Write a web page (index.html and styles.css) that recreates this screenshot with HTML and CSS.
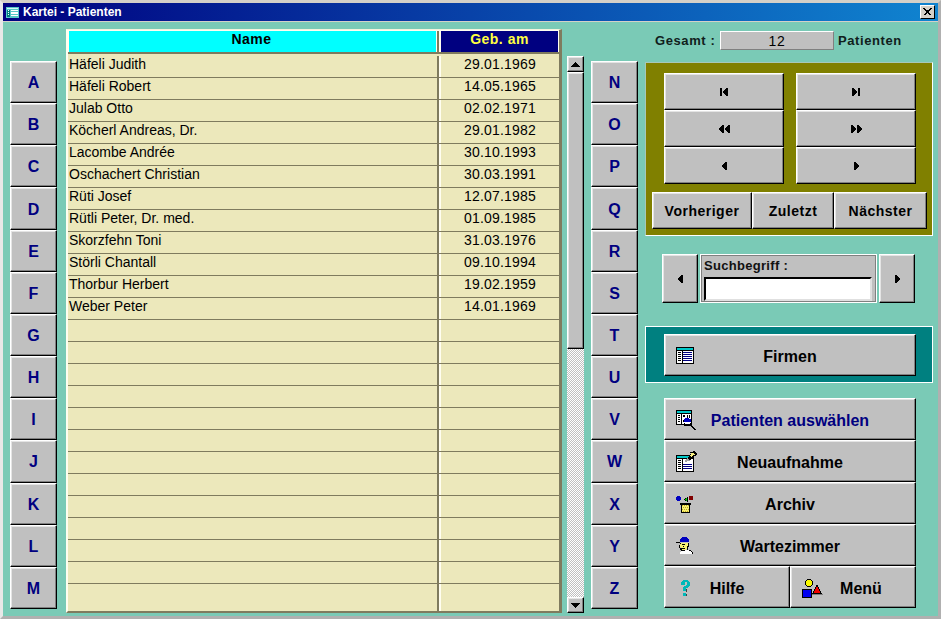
FILE: index.html
```html
<!DOCTYPE html>
<html lang="de">
<head>
    <meta charset="UTF-8">
    <title>Kartei - Patienten</title>
    <link rel="stylesheet" href="styles.css">
</head>
<body>
    <div class="window">
        <div class="titlebar">
            <svg class="title-icon" width="13" height="11" viewBox="0 0 13 11" shape-rendering="crispEdges">
                <rect width="13" height="11" fill="#58c8c8"/>
                <rect x="1" y="1" width="11" height="1" fill="#d8f8f8"/>
                <rect x="1" y="3" width="3" height="7" fill="#008080"/>
                <rect x="2" y="3" width="1" height="1" fill="#fff"/>
                <rect x="2" y="5" width="1" height="1" fill="#fff"/>
                <rect x="2" y="7" width="1" height="1" fill="#fff"/>
                <rect x="5" y="3" width="7" height="1" fill="#fff"/>
                <rect x="5" y="5" width="7" height="2" fill="#fff"/>
                <rect x="5" y="8" width="7" height="1" fill="#fff"/>
            </svg>
            <span class="title-text">Kartei - Patienten</span>
            <div class="close-btn">
                <svg width="9" height="8" viewBox="0 0 9 8" shape-rendering="crispEdges">
                    <path d="M0 0h2v1h1v1h3v-1h1v-1h2v1h-1v1h-1v1h-1v2h1v1h1v1h-2v-1h-1v-1h-1v1h-1v1h-2v-1h1v-1h1v-2h-1v-1h-1z" fill="#000"/>
                </svg>
            </div>
        </div>

        <div class="client">
            <div class="letters">
                <div class="btn letter">A</div>
                <div class="btn letter">B</div>
                <div class="btn letter">C</div>
                <div class="btn letter">D</div>
                <div class="btn letter">E</div>
                <div class="btn letter">F</div>
                <div class="btn letter">G</div>
                <div class="btn letter">H</div>
                <div class="btn letter">I</div>
                <div class="btn letter">J</div>
                <div class="btn letter">K</div>
                <div class="btn letter">L</div>
                <div class="btn letter">M</div>
            </div>

            <div class="list">
                <div class="list-head">
                    <div class="head-name">Name</div>
                    <div class="head-date">Geb. am</div>
                </div>
                <div class="row"><div class="name">Häfeli Judith</div><div class="date">29.01.1969</div></div>
                <div class="row"><div class="name">Häfeli Robert</div><div class="date">14.05.1965</div></div>
                <div class="row"><div class="name">Julab Otto</div><div class="date">02.02.1971</div></div>
                <div class="row"><div class="name">Köcherl Andreas, Dr.</div><div class="date">29.01.1982</div></div>
                <div class="row"><div class="name">Lacombe Andrée</div><div class="date">30.10.1993</div></div>
                <div class="row"><div class="name">Oschachert Christian</div><div class="date">30.03.1991</div></div>
                <div class="row"><div class="name">Rüti Josef</div><div class="date">12.07.1985</div></div>
                <div class="row"><div class="name">Rütli Peter, Dr. med.</div><div class="date">01.09.1985</div></div>
                <div class="row"><div class="name">Skorzfehn Toni</div><div class="date">31.03.1976</div></div>
                <div class="row"><div class="name">Störli Chantall</div><div class="date">09.10.1994</div></div>
                <div class="row"><div class="name">Thorbur Herbert</div><div class="date">19.02.1959</div></div>
                <div class="row"><div class="name">Weber Peter</div><div class="date">14.01.1969</div></div>
                <div class="row"><div class="name"></div><div class="date"></div></div>
                <div class="row"><div class="name"></div><div class="date"></div></div>
                <div class="row"><div class="name"></div><div class="date"></div></div>
                <div class="row"><div class="name"></div><div class="date"></div></div>
                <div class="row"><div class="name"></div><div class="date"></div></div>
                <div class="row"><div class="name"></div><div class="date"></div></div>
                <div class="row"><div class="name"></div><div class="date"></div></div>
                <div class="row"><div class="name"></div><div class="date"></div></div>
                <div class="row"><div class="name"></div><div class="date"></div></div>
                <div class="row"><div class="name"></div><div class="date"></div></div>
                <div class="row"><div class="name"></div><div class="date"></div></div>
                <div class="row"><div class="name"></div><div class="date"></div></div>
                <div class="row row-last"><div class="name"></div><div class="date"></div></div>
            </div>

            <div class="scrollbar">
                <div class="btn scroll-btn">
                    <svg width="9" height="5" viewBox="0 0 9 5" shape-rendering="crispEdges"><path d="M4 0h1v1h1v1h1v1h1v1h1v1h-9v-1h1v-1h1v-1h1v-1h1z"/></svg>
                </div>
                <div class="btn scroll-thumb"></div>
                <div class="scroll-track"></div>
                <div class="btn scroll-btn">
                    <svg width="9" height="5" viewBox="0 0 9 5" shape-rendering="crispEdges"><path d="M0 0h9v1h-1v1h-1v1h-1v1h-1v1h-1v-1h-1v-1h-1v-1h-1z"/></svg>
                </div>
            </div>

            <div class="letters letters-right">
                <div class="btn letter">N</div>
                <div class="btn letter">O</div>
                <div class="btn letter">P</div>
                <div class="btn letter">Q</div>
                <div class="btn letter">R</div>
                <div class="btn letter">S</div>
                <div class="btn letter">T</div>
                <div class="btn letter">U</div>
                <div class="btn letter">V</div>
                <div class="btn letter">W</div>
                <div class="btn letter">X</div>
                <div class="btn letter">Y</div>
                <div class="btn letter">Z</div>
            </div>

            <div class="side">
                <div class="total">
                    <span class="total-label">Gesamt :</span>
                    <div class="total-value">12</div>
                    <span class="total-unit">Patienten</span>
                </div>

                <div class="nav-panel">
                    <div class="nav-grid">
                        <div class="btn nav-btn">
                            <svg width="8" height="8" viewBox="0 0 8 8" shape-rendering="crispEdges"><path d="M0 0h2v8h-2zM6 0h2v8h-2v-1h-1v-1h-1v-1h-1v-2h1v-1h1v-1h1z"/></svg>
                        </div>
                        <div class="btn nav-btn">
                            <svg width="8" height="8" viewBox="0 0 8 8" shape-rendering="crispEdges"><path d="M6 0h2v8h-2zM0 0h2v1h1v1h1v1h1v2h-1v1h-1v1h-1v1h-2z"/></svg>
                        </div>
                        <div class="btn nav-btn">
                            <svg width="11" height="8" viewBox="0 0 11 8" shape-rendering="crispEdges"><path d="M3 0h2v8h-2v-1h-1v-1h-1v-1h-1v-2h1v-1h1v-1h1zM9 0h2v8h-2v-1h-1v-1h-1v-1h-1v-2h1v-1h1v-1h1z"/></svg>
                        </div>
                        <div class="btn nav-btn">
                            <svg width="11" height="8" viewBox="0 0 11 8" shape-rendering="crispEdges"><path d="M0 0h2v1h1v1h1v1h1v2h-1v1h-1v1h-1v1h-2zM6 0h2v1h1v1h1v1h1v2h-1v1h-1v1h-1v1h-2z"/></svg>
                        </div>
                        <div class="btn nav-btn">
                            <svg width="5" height="8" viewBox="0 0 5 8" shape-rendering="crispEdges"><path d="M3 0h2v8h-2v-1h-1v-1h-1v-1h-1v-2h1v-1h1v-1h1z"/></svg>
                        </div>
                        <div class="btn nav-btn">
                            <svg width="5" height="8" viewBox="0 0 5 8" shape-rendering="crispEdges"><path d="M0 0h2v1h1v1h1v1h1v2h-1v1h-1v1h-1v1h-2z"/></svg>
                        </div>
                    </div>
                    <div class="nav-text">
                        <div class="btn nav-label prev">Vorheriger</div>
                        <div class="btn nav-label last">Zuletzt</div>
                        <div class="btn nav-label next">Nächster</div>
                    </div>
                </div>

                <div class="search">
                    <div class="btn search-btn">
                        <svg width="5" height="8" viewBox="0 0 5 8" shape-rendering="crispEdges"><path d="M3 0h2v8h-2v-1h-1v-1h-1v-1h-1v-2h1v-1h1v-1h1z"/></svg>
                    </div>
                    <div class="search-box">
                        <span class="search-label">Suchbegriff :</span>
                        <input class="search-input" type="text">
                    </div>
                    <div class="btn search-btn">
                        <svg width="5" height="8" viewBox="0 0 5 8" shape-rendering="crispEdges"><path d="M0 0h2v1h1v1h1v1h1v2h-1v1h-1v1h-1v1h-2z"/></svg>
                    </div>
                </div>

                <div class="firm-panel">
                    <div class="btn action firm-btn">
                        <svg class="action-icon" width="18" height="17" viewBox="0 0 18 17" shape-rendering="crispEdges">
                            <rect width="18" height="17" fill="#000"/>
                            <rect x="1" y="1" width="16" height="2" fill="#00c8c8"/>
                            <rect x="1" y="4" width="16" height="12" fill="#fff"/>
                            <path d="M2 5h3v1h-3zM2 7h3v1h-3zM2 9h3v1h-3zM2 11h3v1h-3zM2 13h3v1h-3z" fill="#000"/>
                            <path d="M7 5h9v1h-9zM7 7h9v1h-9zM7 9h9v1h-9zM7 11h9v1h-9zM7 13h9v1h-9z" fill="#000080"/>
                            <rect x="6" y="4" width="1" height="12" fill="#000"/>
                        </svg>
                        <span class="action-text">Firmen</span>
                    </div>
                </div>

                <div class="actions">
                    <div class="btn action">
                        <svg class="action-icon" width="20" height="20" viewBox="0 0 20 20" shape-rendering="crispEdges">
                            <rect width="16" height="15" fill="#000"/>
                            <rect x="1" y="1" width="14" height="2" fill="#00c8c8"/>
                            <rect x="1" y="4" width="14" height="10" fill="#fff"/>
                            <path d="M2 5h2v1h-2zM2 7h2v1h-2zM2 9h2v1h-2zM2 11h2v1h-2zM5 4h1v10h-1zM7 5h2v2h-2zM11 5h1v3h-1zM13 5h1v3h-1z" fill="#000"/>
                            <path d="M8 9h1v-1h4v1h2v3h-7z" fill="#0000c0"/>
                            <path d="M7 10h1v3h1v1h5v-1h1v1h-1v1h-5v-1h-1zM8 15h6v1h-6z" fill="#000"/>
                            <path d="M9 13h5v1h-5z" fill="#fff"/>
                            <path d="M14 15h2v1h1v1h1v1h1v1h1v1h-2v-1h-1v-1h-1v-1h-1v-1h-1z" fill="#000"/>
                        </svg>
                        <span class="action-text selected">Patienten auswählen</span>
                    </div>
                    <div class="btn action">
                        <svg class="action-icon" width="21" height="21" viewBox="0 0 21 21" shape-rendering="crispEdges">
                            <rect y="4" width="18" height="17" fill="#000"/>
                            <rect x="1" y="5" width="16" height="2" fill="#00c8c8"/>
                            <rect x="1" y="8" width="16" height="12" fill="#fff"/>
                            <path d="M2 9h3v1h-3zM2 11h3v1h-3zM2 13h3v1h-3zM2 15h3v1h-3zM2 17h3v1h-3zM6 8h1v12h-1z" fill="#000"/>
                            <path d="M7 13h9v1h-9zM7 15h9v1h-9zM7 17h9v1h-9z" fill="#000080"/>
                            <path d="M14 1h3v-1h2v1h1v1h1v2h-1v1h-2v1h-1v1h-1v1h-1v1h-2v-1h-1v-2h1v-1h1v-2h1z" fill="#000"/>
                            <path d="M15 2h3v1h1v1h-2v1h-1v1h-1v-1h-1v-1h1z" fill="#f8f080"/>
                            <path d="M11 7h1v1h1v1h1v1h-3v1h-2v-2h1v-1h1z" fill="#a0a0a0"/>
                        </svg>
                        <span class="action-text">Neuaufnahme</span>
                    </div>
                    <div class="btn action">
                        <svg class="action-icon" width="18" height="18" viewBox="0 0 18 18" shape-rendering="crispEdges">
                            <path d="M1 1h3v1h1v3h-1v1h-3v-1h-1v-3h1z" fill="#0000c0"/>
                            <path d="M13 1h4v4h-4z" fill="#800000"/>
                            <path d="M11 2h1v5h-1v-1h-2v-1h-1v-1h1v-1h2z" fill="#000"/>
                            <path d="M10 3h1v3h-1v-1h-1v-1h1z" fill="#00c000"/>
                            <path d="M4 8h11v2h-1v8h-9v-8h-1z" fill="#000"/>
                            <path d="M6 10h7v7h-7z" fill="#f8f070"/>
                            <path d="M6 10h1v1h-1zM8 10h1v1h-1zM10 10h1v1h-1zM12 10h1v1h-1zM7 12h1v1h-1zM9 12h1v1h-1zM11 12h1v1h-1zM6 14h1v1h-1zM8 14h1v1h-1zM10 14h1v1h-1zM12 14h1v1h-1zM7 16h1v1h-1zM9 16h1v1h-1zM11 16h1v1h-1z" fill="#c0a820"/>
                        </svg>
                        <span class="action-text">Archiv</span>
                    </div>
                    <div class="btn action">
                        <svg class="action-icon" width="17" height="17" viewBox="0 0 17 17" shape-rendering="crispEdges">
                            <path d="M0 5h4v1h-4z" fill="#000"/>
                            <path d="M5 1h1v-1h5v1h1v1h1v3h-9v-3h1z" fill="#0000c0"/>
                            <path d="M4 6h8v3h-1v3h-1v1h-4v-1h-1v-2h-1z" fill="#f8f070"/>
                            <path d="M4 6h1v1h-1zM6 7h3v1h-3zM7 9h1v1h-1zM5 11h4v1h-4zM3 8h1v3h1v1h1v1h4v1h-5v-1h-1v-2h-1zM12 6h1v4h-1v3h-1v-4h1z" fill="#000"/>
                            <path d="M9 13h4v1h2v1h1v2h-12v-2h1v-1h4z" fill="#fff"/>
                            <path d="M13 13h2v1h1v1h1v2h-1v-2h-1v-1h-2z" fill="#000"/>
                        </svg>
                        <span class="action-text">Wartezimmer</span>
                    </div>
                    <div class="action-pair">
                        <div class="btn action help-btn">
                            <svg class="action-icon" width="10" height="16" viewBox="0 0 10 16" shape-rendering="crispEdges">
                                <path d="M2 0h6v1h1v1h1v4h-1v1h-1v1h-2v3h-3v-4h1v-1h2v-1h1v-3h-2v3h-4v-3h1v-1h1z" fill="#00b8b8"/>
                                <path d="M3 13h3v3h-3z" fill="#00b8b8"/>
                                <path d="M6 9h1v3h-1zM6 14h1v2h-1z" fill="#404040"/>
                            </svg>
                            <span class="action-text">Hilfe</span>
                        </div>
                        <div class="btn action menu-btn">
                            <svg class="action-icon" width="21" height="20" viewBox="0 0 21 20" shape-rendering="crispEdges">
                                <path d="M5 1h4v1h1v1h1v4h-1v1h-1v1h-4v-1h-1v-1h-1v-4h1v-1h1z" fill="#000"/>
                                <path d="M5 2h4v1h1v4h-1v1h-4v-1h-1v-4h1z" fill="#f8f800"/>
                                <rect y="11" width="10" height="9" fill="#000"/>
                                <rect x="1" y="12" width="8" height="7" fill="#0000f0"/>
                                <path d="M14 7h2v2h1v2h1v2h1v2h1v1h-10v-1h1v-2h1v-2h1v-2h1z" fill="#000"/>
                                <path d="M14 9h2v2h1v2h1v2h-6v-2h1v-2h1z" fill="#f00000"/>
                                <rect x="10" y="16" width="11" height="1" fill="#808080"/>
                            </svg>
                            <span class="action-text menu-text">Menü</span>
                        </div>
                    </div>
                </div>
            </div>
        </div>
    </div>
</body>
</html>
```

FILE: styles.css
```css
* {
    margin: 0;
    padding: 0;
    box-sizing: border-box;
    font-family: "Liberation Sans", Arial, sans-serif;
}

body {
    width: 941px;
    height: 619px;
    overflow: hidden;
    background: #c0c0c0;
}

.window {
    width: 941px;
    height: 619px;
    display: flex;
    flex-direction: column;
    background: #d4d0c8;
    border: 3px solid #d4d0c8;
    border-left-color: #e8e8e8;
    border-bottom-color: #b0b0b0;
    border-right-color: #b0b0b0;
}

/* Title bar */
.titlebar {
    height: 18px;
    flex: none;
    display: flex;
    align-items: center;
    padding: 0 3px;
    background: linear-gradient(90deg, #000080 0%, #1084d0 100%);
}

.title-icon {
    flex: none;
}

.title-text {
    margin-left: 4px;
    color: #fff;
    font-size: 12px;
    font-weight: bold;
    flex: 1;
}

.close-btn {
    width: 15px;
    height: 14px;
    display: flex;
    align-items: center;
    justify-content: center;
    background: #d4d0c8;
    border: 1px solid;
    border-color: #fff #000 #000 #fff;
}

/* Client area */
.client {
    flex: 1;
    display: flex;
    margin-top: 1px;
    padding-left: 7px;
    background: #7acab6;
}

.btn {
    display: flex;
    align-items: center;
    justify-content: center;
    background: #c0c0c0;
    border: 1px solid;
    border-color: #fff #000 #000 #fff;
    box-shadow: inset -1px -1px 0 #808080, inset 1px 1px 0 #e4e4e4;
    color: #000;
    font-size: 15px;
    font-weight: bold;
}

.letters {
    width: 47px;
    height: 548px;
    margin-top: 39px;
    display: grid;
    grid-auto-rows: 1fr;
}

.letters-right {
    margin-left: 7px;
}

.letter {
    padding-top: 2px;
    color: #000080;
    font-size: 16px;
}

/* Patient list */
.list {
    width: 496px;
    height: 584px;
    margin: 7px 0 0 9px;
    display: flex;
    flex-direction: column;
    background: #ece8bb;
    border: solid #7f7b5e;
    border-width: 1px 3px 2px 2px;
    border-top-color: #f4f2dc;
    border-left-color: #fffef0;
}

.list-head {
    height: 24px;
    flex: none;
    display: grid;
    grid-template-columns: 371px 120px;
    border-bottom: 2px solid #7f7b5e;
    background: #fffef0;
}

.head-name,
.head-date {
    display: flex;
    align-items: center;
    justify-content: center;
    font-size: 14px;
    font-weight: bold;
    letter-spacing: 0.5px;
    padding-bottom: 5px;
}

.head-name {
    margin: 1px 3px 1px 1px;
    padding-right: 2px;
    background: #00ffff;
    box-shadow: 1px 0 0 #fffef0, 3px 0 0 #7f7b5e;
    color: #000;
}

.head-date {
    margin: 1px 1px 1px 2px;
    background: #000080;
    color: #ffff40;
}

.row {
    height: 22px;
    flex: none;
    display: grid;
    grid-template-columns: 371px 120px;
    border-bottom: 1px solid #7f7b5e;
    font-size: 14px;
    color: #000;
}

.list-head + .row {
    height: 24px;
    padding-top: 2px;
}

.row-last {
    flex: 1;
    border-bottom: none;
}

.name {
    padding-left: 1px;
    box-shadow: inset -2px 0 0 #7f7b5e;
}

.date {
    padding-left: 2px;
    letter-spacing: 0.2px;
    text-align: center;
    box-shadow: inset 2px 0 0 #fffef0;
}

/* Scrollbar */
.scrollbar {
    width: 17px;
    height: 557px;
    margin: 34px 0 0 5px;
    display: flex;
    flex-direction: column;
}

.scroll-btn {
    height: 16px;
    flex: none;
}

.scroll-thumb {
    height: 277px;
    flex: none;
}

.scroll-track {
    flex: 1;
    background: repeating-conic-gradient(#c0c0c0 0 25%, #fff 0 50%) 0 0 / 2px 2px;
}

/* Right side */
.side {
    width: 288px;
    margin-left: 7px;
    display: flex;
    flex-direction: column;
}

.total {
    height: 19px;
    margin-top: 9px;
    padding-left: 10px;
    display: flex;
    align-items: center;
    font-size: 13px;
    font-weight: bold;
    letter-spacing: 0.6px;
    color: #10201c;
}

.total-label {
    width: 65px;
}

.total-value {
    width: 114px;
    height: 19px;
    display: flex;
    align-items: center;
    justify-content: center;
    background: #c0c0c0;
    border: 1px solid;
    border-color: #fff #808080 #808080 #fff;
    font-weight: normal;
    font-size: 14px;
    color: #000;
}

.total-unit {
    margin-left: 4px;
}

.nav-panel {
    height: 174px;
    margin-top: 12px;
    display: flex;
    flex-direction: column;
    background: #808000;
    border: 1px solid #fff;
    border-top-color: #a8c8b8;
    border-left-color: #a8c8b8;
}

.nav-grid {
    width: 252px;
    margin: 10px 0 0 18px;
    display: grid;
    grid-template-columns: 120px 120px;
    grid-auto-rows: 37px;
    column-gap: 12px;
}

.nav-btn svg {
    display: block;
}

.nav-text {
    width: 275px;
    height: 37px;
    margin: 8px 0 0 6px;
    display: flex;
}

.nav-label {
    font-size: 14px;
    letter-spacing: 0.5px;
    height: 37px;
}

.prev {
    width: 100px;
}

.last {
    width: 82px;
}

.next {
    width: 93px;
}

.search {
    height: 49px;
    margin: 18px 0 0 17px;
    display: flex;
    gap: 2px;
}

.search-btn {
    width: 36px;
}

.search-box {
    width: 177px;
    padding: 1px 4px 0 3px;
    display: flex;
    flex-direction: column;
    background: #c0c0c0;
    border: 1px solid #fff;
    box-shadow: inset 0 0 0 1px #808080;
}

.search-label {
    height: 21px;
    padding-top: 2px;
    font-size: 13px;
    font-weight: bold;
    letter-spacing: 0.3px;
    color: #111;
}

.search-input {
    width: 168px;
    height: 24px;
    background: #fff;
    border: 2px solid;
    border-color: #000 #e0e0e0 #e0e0e0 #000;
    outline: none;
}

.firm-panel {
    height: 57px;
    margin-top: 23px;
    padding: 7px 0 0 18px;
    background: #008080;
    border: 1px solid #fff;
}

.firm-btn {
    width: 252px;
    height: 43px;
}

.actions {
    width: 252px;
    margin: 15px 0 0 19px;
    display: flex;
    flex-direction: column;
}

.action {
    height: 42px;
    display: grid;
    grid-template-columns: 1fr auto 1fr;
    align-items: center;
    padding: 1px 11px 0;
}

.action-icon {
    display: block;
    justify-self: start;
}

.action-text {
    padding-top: 2px;
    font-size: 16px;
    font-weight: bold;
}

.selected {
    color: #000080;
}

.action-pair {
    display: flex;
}

.help-btn {
    width: 126px;
    padding-left: 15px;
    padding-right: 15px;
}

.menu-btn {
    width: 126px;
}

.menu-text {
    margin-left: 16px;
}
```
